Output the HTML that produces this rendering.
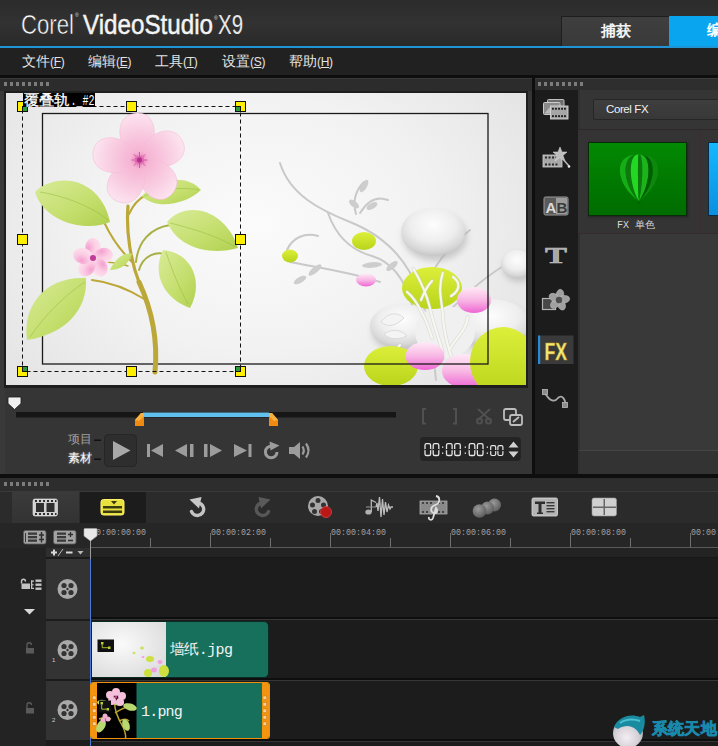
<!DOCTYPE html>
<html><head><meta charset="utf-8">
<style>
*{margin:0;padding:0;box-sizing:border-box}
html,body{width:718px;height:746px;overflow:hidden;background:#1b1b1b;font-family:"Liberation Sans",sans-serif}
.a{position:absolute}
svg{position:absolute;overflow:visible}
#title{left:0;top:0;width:718px;height:46px;background:linear-gradient(#2b2b2b,#323232 50%,#292929)}
#blue{left:0;top:46px;width:718px;height:2px;background:#1f95d6}
#menu{left:0;top:48px;width:718px;height:27px;background:#212121}
.mi{top:54px;color:#e4e4e4;font-size:14px;white-space:nowrap;line-height:15px}
.mi u{text-decoration:none;font-size:12px;letter-spacing:-0.3px}
#sep1{left:0;top:75px;width:718px;height:3px;background:#0e0e0e}
#lp{left:0;top:78px;width:532px;height:396px;background:#353535}
#rp{left:535px;top:78px;width:183px;height:396px;background:#333}
#sep2{left:532px;top:75px;width:3px;height:403px;background:#0e0e0e}
#sep3{left:0;top:474px;width:718px;height:4px;background:#0e0e0e}
#tl{left:0;top:478px;width:718px;height:268px;background:#1c1c1c}
.grip{height:4px;background:repeating-linear-gradient(90deg,#7c7c7c 0 3px,transparent 3px 6px)}
#prevframe{left:4px;top:91px;width:524px;height:297px;background:#1e1e1e}
#prev{left:6px;top:93px;width:520px;height:292px;overflow:hidden;background:radial-gradient(ellipse 380px 280px at 250px 130px,#fbfbfb,#f2f2f2 45%,#e4e4e4 85%,#dcdcdc 100%)}
.h{position:absolute;width:11px;height:11px;background:#ffef00;border:1.5px solid #111}
</style></head><body>
<div id="title" class="a"></div>
<svg width="718" height="46" style="left:0;top:0">
 <text x="21" y="33.5" font-size="28" fill="#ffffff" stroke="#303030" stroke-width="0.6" textLength="53" lengthAdjust="spacingAndGlyphs" font-family="Liberation Sans">Corel</text>
 <text x="75" y="17" font-size="5" fill="#ddd" font-family="Liberation Sans">®</text>
 <text x="83" y="33.5" font-size="28" fill="#f4f4f4" stroke="#f4f4f4" stroke-width="0.5" textLength="130" lengthAdjust="spacingAndGlyphs" font-family="Liberation Sans">VideoStudio</text>
 <text x="214" y="20" font-size="5" fill="#ddd" font-family="Liberation Sans">®</text>
 <text x="218" y="33.5" font-size="28" fill="#e6e6e6" textLength="25" lengthAdjust="spacingAndGlyphs" font-family="Liberation Sans">X9</text>
</svg>
<div class="a" style="left:561px;top:16px;width:108px;height:30px;background:linear-gradient(#3f3f3f,#393939);border-top:1px solid #1e1e1e;border-left:1px solid #1e1e1e;color:#f4f4f4;font-size:15px;font-weight:bold;text-align:center;line-height:27px">捕获</div>
<div class="a" style="left:669px;top:16px;width:49px;height:30px;background:#0aa5ef;color:#fff;font-size:15px;font-weight:bold;line-height:27px;padding-left:38px;white-space:nowrap;overflow:hidden">编辑</div>
<div id="blue" class="a"></div>
<div id="menu" class="a"></div>
<div class="a mi" style="left:22px">文件<u>(<b style="font-weight:normal;text-decoration:underline;text-underline-offset:1px">F</b>)</u></div>
<div class="a mi" style="left:88px">编辑<u>(<b style="font-weight:normal;text-decoration:underline;text-underline-offset:1px">E</b>)</u></div>
<div class="a mi" style="left:155px">工具<u>(<b style="font-weight:normal;text-decoration:underline;text-underline-offset:1px">T</b>)</u></div>
<div class="a mi" style="left:222px">设置<u>(<b style="font-weight:normal;text-decoration:underline;text-underline-offset:1px">S</b>)</u></div>
<div class="a mi" style="left:289px">帮助<u>(<b style="font-weight:normal;text-decoration:underline;text-underline-offset:1px">H</b>)</u></div>
<div id="sep1" class="a"></div>
<div id="lp" class="a"></div>
<div class="a" style="left:0;top:78px;width:532px;height:13px;background:#2c2c2c;border-top:1px solid #3a3a3a"></div>
<div class="a grip" style="left:4px;top:82px;width:46px"></div>
<div class="a" style="left:0;top:91px;width:5px;height:383px;background:#393939"></div>
<div id="prevframe" class="a"></div>
<div id="prev" class="a"><svg width="520" height="292" style="left:0;top:0;overflow:hidden">
<defs>
 <linearGradient id="lime" x1="0" y1="0" x2="0" y2="1"><stop offset="0" stop-color="#dcef3a"/><stop offset="1" stop-color="#b9d41a"/></linearGradient>
 <linearGradient id="pink" x1="0" y1="0" x2="0" y2="1"><stop offset="0" stop-color="#ffeaf6"/><stop offset="0.5" stop-color="#f8b8e4"/><stop offset="1" stop-color="#ee66d4"/></linearGradient>
 <radialGradient id="wb" cx="0.5" cy="0.35" r="0.65"><stop offset="0" stop-color="#fdfdfd"/><stop offset="0.55" stop-color="#eeeeee"/><stop offset="0.85" stop-color="#d8d8d8"/><stop offset="1" stop-color="#c6c6c6"/></radialGradient>
 <radialGradient id="pet" cx="0.2" cy="0.5" r="0.9"><stop offset="0" stop-color="#f4a0d0"/><stop offset="0.45" stop-color="#fbcde3"/><stop offset="1" stop-color="#fee6f1"/></radialGradient>
 <radialGradient id="petU" gradientUnits="userSpaceOnUse" cx="139.5" cy="160" r="50"><stop offset="0" stop-color="#e870b0"/><stop offset="0.18" stop-color="#f6b4d4"/><stop offset="0.6" stop-color="#f9cee2"/><stop offset="1" stop-color="#fde8f2"/></radialGradient>
 <filter id="blur3" x="-50%" y="-50%" width="200%" height="200%"><feGaussianBlur stdDeviation="3"/></filter>
 <linearGradient id="leaf" x1="0" y1="0" x2="1" y2="1"><stop offset="0" stop-color="#d8eb98"/><stop offset="0.6" stop-color="#c4de6c"/><stop offset="1" stop-color="#b0d050"/></linearGradient>
</defs>
<g transform="translate(-6,-93)">
 <!-- gray vines -->
 <g fill="none" stroke="#c9c9c9" stroke-width="2" stroke-linecap="round">
  <path d="M280,163 C290,195 320,210 350,222 C380,234 405,255 418,290 C428,315 432,340 436,380"/>
  <path d="M328,213 C336,236 350,250 372,256 C392,262 405,280 412,305"/>
  <path d="M287,250 C292,238 305,232 318,236 M290,262 C320,268 350,272 380,282"/>
  <path d="M356,214 C352,200 356,190 364,182 M360,213 C368,200 378,196 388,200"/>
  <path d="M420,300 C430,270 445,250 470,230 M440,320 C460,300 480,280 505,265"/>
 </g>
 <g fill="#cdcdcd">
  <ellipse cx="364" cy="186" rx="3" ry="7" transform="rotate(30 364 186)"/>
  <ellipse cx="354" cy="204" rx="3" ry="6" transform="rotate(-50 354 204)"/>
  <ellipse cx="372" cy="206" rx="3" ry="6" transform="rotate(60 372 206)"/>
  <ellipse cx="315" cy="270" rx="3" ry="8" transform="rotate(50 315 270)"/>
  <ellipse cx="300" cy="280" rx="3" ry="7" transform="rotate(60 300 280)"/>
  <ellipse cx="372" cy="265" rx="2.8" ry="10" transform="rotate(85 372 265)"/><ellipse cx="392" cy="266" rx="3" ry="7" transform="rotate(50 392 266)"/>
 </g>
 <!-- white bubbles -->
 <g filter="url(#blur3)" fill="#a8a8a8" opacity="0.55">
  <ellipse cx="519" cy="268" rx="16" ry="14"/>
  <ellipse cx="435" cy="237" rx="32" ry="24"/>
  <ellipse cx="404" cy="331" rx="32" ry="22"/>
  <ellipse cx="494" cy="328" rx="38" ry="24"/>
 </g>
 <ellipse cx="517" cy="264" rx="16" ry="14" fill="url(#wb)"/>
 <ellipse cx="433" cy="232" rx="32" ry="24" fill="url(#wb)"/>
 <ellipse cx="402" cy="326" rx="32" ry="22" fill="url(#wb)"/>
 <ellipse cx="492" cy="323" rx="38" ry="24" fill="url(#wb)"/>
 <ellipse cx="445" cy="332" rx="30" ry="26" fill="#f0f0f0"/>

 <!-- lime and pink -->
 <ellipse cx="290" cy="256" rx="8" ry="6.5" fill="url(#lime)"/>
 <ellipse cx="364" cy="241" rx="12" ry="9" fill="url(#lime)"/>
 <ellipse cx="366" cy="280" rx="10" ry="6.5" fill="url(#pink)"/>
 <ellipse cx="432" cy="288" rx="30" ry="21" fill="url(#lime)"/>
 <ellipse cx="474" cy="300" rx="17" ry="13" fill="url(#pink)"/>
 <g fill="none" stroke-linecap="round">
  <path d="M442.7,352 C438,335 432,320 430,308 C426,292 420,280 413.4,268.8 M451,356 C446,340 443,325 442.7,312.7 C441,298 438,288 442.7,273 M432.2,338 C428,325 425,318 421.8,312.7 C417,302 412,296 407,291.8 M453,277 C460,282 461,290 451,296 M449,350 C455,340 460,335 463.6,329.4 C466,325 467,322 467.7,317 M421,300 C425,290 428,285 432,281 M400,345 C395,350 395,358 402,360 C407,361 409,356 405,353" stroke="#cfcfcf" stroke-width="3.6" opacity="0.6"/>
  <path d="M442.7,352 C438,335 432,320 430,308 C426,292 420,280 413.4,268.8 M451,356 C446,340 443,325 442.7,312.7 C441,298 438,288 442.7,273 M432.2,338 C428,325 425,318 421.8,312.7 C417,302 412,296 407,291.8 M453,277 C460,282 461,290 451,296 M449,350 C455,340 460,335 463.6,329.4 C466,325 467,322 467.7,317 M421,300 C425,290 428,285 432,281 M400,345 C395,350 395,358 402,360 C407,361 409,356 405,353" stroke="#f6f8ee" stroke-width="2.2"/>
 </g>
 <g fill="#f4f4f4" stroke="#d4d4d4" stroke-width="0.8">
  <path d="M381,322 C388,312 398,312 404,318 C396,326 388,328 381,322 Z"/>
  <path d="M384,334 C392,328 402,330 407,336 C398,340 390,340 384,334 Z"/>
 </g>
 <ellipse cx="391" cy="366" rx="27" ry="20" fill="url(#lime)"/>
 <ellipse cx="425" cy="356" rx="19.5" ry="14" fill="url(#pink)"/>
 <ellipse cx="465" cy="371" rx="23" ry="17" fill="url(#pink)"/>
 <ellipse cx="503" cy="362" rx="33" ry="35" fill="url(#lime)"/>
 <!-- inner rect -->
 <rect x="42.5" y="113.5" width="445.5" height="250.5" fill="none" stroke="#1a1a1a" stroke-width="1.3"/>
 <!-- flower -->
 <g fill="none" stroke="#bba838" stroke-linecap="round">
  <path d="M128,206 C126,230 130,260 140,285" stroke-width="3.2"/><path d="M139,282 C152,310 158,340 155,372" stroke-width="5"/>
  <path d="M132,262 C120,250 110,235 104,222" stroke-width="2"/>
  <path d="M129,214 C133,205 138,199 146,195" stroke-width="2"/>
  <path d="M136,262 C138,242 150,228 170,225" stroke-width="2" stroke="#a8b044"/>
  <path d="M139,270 C143,256 156,250 168,255" stroke-width="2" stroke="#a8b044"/>
  <path d="M146,300 C130,290 110,282 92,280" stroke-width="2"/>
  <path d="M128,266 C118,262 108,262 100,262" stroke-width="1.5"/>
 </g>
 <g fill="url(#leaf)">
  <path d="M35,192 C55,172 100,176 110,222 C88,232 45,224 35,192 Z"/>
  <path d="M142,196 C155,180 185,172 201,190 C185,205 155,210 142,196 Z"/>
  <path d="M167,222 C185,200 225,208 238,248 C210,256 178,248 167,222 Z"/>
  <path d="M190,308 C205,280 190,252 163,250 C152,272 162,298 190,308 Z"/>
  <path d="M110,270 C115,258 125,252 132,254 C128,265 120,270 110,270 Z"/>
  <path d="M27,340 C22,306 45,276 86,278 C88,310 65,334 27,340 Z"/>
 </g>
 <g stroke="#98bc40" stroke-width="0.8" fill="none" opacity="0.7">
  <path d="M40,192 C60,195 90,205 108,220 M144,196 C160,190 180,186 199,190 M170,223 C190,228 215,235 236,247 M188,304 C180,290 172,270 166,252 M30,337 C45,315 65,295 85,282"/>
 </g>
 <g fill="url(#petU)" stroke="#f4bcd6" stroke-width="0.6"><path d="M139.5,160.0 C116.9,152.5 111.4,116.2 135.4,113.2 C159.4,110.1 160.4,148.7 139.5,160.0 Z"/><path d="M139.5,160.0 C139.2,136.2 171.8,119.2 182.4,140.9 C193.1,162.6 157.0,176.1 139.5,160.0 Z"/><path d="M139.5,160.0 C161.9,152.0 188.6,177.2 171.6,194.4 C154.5,211.5 129.9,181.8 139.5,160.0 Z"/><path d="M139.5,160.0 C153.7,179.1 137.4,212.0 116.0,200.7 C94.6,189.4 115.9,157.2 139.5,160.0 Z"/><path d="M139.5,160.0 C126.4,179.9 89.9,175.8 93.2,151.8 C96.5,127.9 134.0,136.8 139.5,160.0 Z"/></g>
 <g stroke="#c8449a" stroke-width="0.9" opacity="0.85"><path d="M139.5,160 L147.5,160.0 M139.5,160 L144.1,161.9 M139.5,160 L145.2,165.7 M139.5,160 L141.4,164.6 M139.5,160 L139.5,168.0 M139.5,160 L137.6,164.6 M139.5,160 L133.8,165.7 M139.5,160 L134.9,161.9 M139.5,160 L131.5,160.0 M139.5,160 L134.9,158.1 M139.5,160 L133.8,154.3 M139.5,160 L137.6,155.4 M139.5,160 L139.5,152.0 M139.5,160 L141.4,155.4 M139.5,160 L145.2,154.3 M139.5,160 L144.1,158.1 "/></g>
 <circle cx="139.5" cy="160" r="2.5" fill="#b83090"/>
 <g transform="translate(93,258)">
  <ellipse cx="0" cy="-10" rx="8" ry="10" fill="url(#pet)"/>
  <ellipse cx="10" cy="-2" rx="8" ry="10" fill="url(#pet)" transform="rotate(72 10 -2)"/>
  <ellipse cx="6" cy="9" rx="8" ry="10" fill="url(#pet)" transform="rotate(144 6 9)"/>
  <ellipse cx="-6" cy="9" rx="8" ry="10" fill="url(#pet)" transform="rotate(-144 -6 9)"/>
  <ellipse cx="-10" cy="-2" rx="8" ry="10" fill="url(#pet)" transform="rotate(-72 -10 -2)"/>
  <circle r="3" fill="#c03a98"/>
 </g>
 <!-- selection -->
 <rect x="22.5" y="106.5" width="218" height="265" fill="none" stroke="#111" stroke-width="1" stroke-dasharray="4,3"/>
</g>
</svg>
<div class="h" style="left:11px;top:8px"><i style="position:absolute;right:0;bottom:0;width:5px;height:5px;background:#2a9a3a;border-left:1px solid #111;border-top:1px solid #111"></i></div>
<div class="h" style="left:120px;top:8px"></div>
<div class="h" style="left:229px;top:8px"><i style="position:absolute;left:0;bottom:0;width:5px;height:5px;background:#2a9a3a;border-right:1px solid #111;border-top:1px solid #111"></i></div>
<div class="h" style="left:11px;top:141px"></div>
<div class="h" style="left:229px;top:141px"></div>
<div class="h" style="left:11px;top:273px"><i style="position:absolute;right:0;top:0;width:5px;height:5px;background:#2a9a3a;border-left:1px solid #111;border-bottom:1px solid #111"></i></div>
<div class="h" style="left:120px;top:273px"></div>
<div class="h" style="left:229px;top:273px"><i style="position:absolute;left:0;top:0;width:5px;height:5px;background:#2a9a3a;border-right:1px solid #111;border-bottom:1px solid #111"></i></div>
<div class="a" style="left:17px;top:0;width:72px;height:14px;background:#000"></div><svg width="90" height="20" style="left:0;top:0"><text x="17.5" y="12" font-size="14.5" fill="#fff" stroke="#fff" stroke-width="0.25" textLength="46" lengthAdjust="spacingAndGlyphs">覆叠轨</text><text x="64.5" y="12" font-family="Liberation Mono" font-size="14" fill="#fff" textLength="24" lengthAdjust="spacingAndGlyphs">._#2</text></svg>
</div>

<!-- player controls -->
<svg width="532" height="90" style="left:0;top:385px">
 <g transform="translate(0,-385)">
  <rect x="6" y="385" width="520" height="2" fill="#1e1e1e"/>
  <path d="M8,398 Q8,397 9.5,397 L20,397 Q21,397 21,398 L21,403.5 L14.5,409.5 L8,403.5 Z" fill="#f0f0f0" stroke="#1a1a1a" stroke-width="0.8"/>
  <rect x="16" y="412" width="380" height="5.5" fill="#161616"/>
  <rect x="143" y="412.5" width="126" height="4.5" fill="#62c0ef"/>
  <path d="M135,426 L135,420 L141,413 L144,413 L144,426 Z" fill="#f08a10"/>
  <path d="M135,420 L141,413 L144,413 L144,416 L139,421 Z" fill="#f8b040"/>
  <path d="M278,426 L278,420 L272,413 L269,413 L269,426 Z" fill="#f08a10"/>
  <path d="M278,420 L272,413 L269,413 L269,416 L274,421 Z" fill="#f8b040"/>
  <rect x="94" y="439.5" width="7" height="1.5" fill="#111"/>
  <rect x="94" y="458.5" width="7" height="1.5" fill="#111"/>
  <rect x="104.5" y="434.5" width="32" height="32" rx="4" fill="#2e2e2e" stroke="#262626"/>
  <path d="M113,441 L130.5,450.5 L113,460 Z" fill="#a8a8a8"/>
  <g fill="#9c9c9c">
   <rect x="147" y="444" width="3" height="13"/><path d="M163,444 L151,450.5 L163,457 Z"/>
   <path d="M187,444 L175,450.5 L187,457 Z"/><rect x="190" y="444" width="3.5" height="13"/>
   <rect x="204" y="444" width="3.5" height="13"/><path d="M210,444 L222,450.5 L210,457 Z"/>
   <path d="M234,444 L247,450.5 L234,457 Z"/><rect x="248.5" y="444" width="3" height="13"/>
   <path d="M289,447 L294,447 L300,442 L300,459 L294,454 L289,454 Z"/>
  </g>
  <g fill="none" stroke="#9c9c9c" stroke-width="2.2">
   <path d="M302.5,446.5 Q305,450.5 302.5,454.5"/><path d="M306,443.5 Q311,450.5 306,457.5"/>
  </g>
  <path d="M271.5,446.2 A5.8,5.8 0 1 0 277,452" fill="none" stroke="#9c9c9c" stroke-width="3"/><path d="M269.5,441.5 L279.5,445.5 L270.5,450.5 Z" fill="#9c9c9c"/>
  <g fill="none" stroke="#505050" stroke-width="2">
   <path d="M426,409 L423,409 L423,423.5 L426,423.5"/>
   <path d="M453,409 L456,409 L456,423.5 L453,423.5"/>
   <path d="M478,409 L490,420 M490,409 L478,420"/>
   <circle cx="479.5" cy="421" r="2.5"/><circle cx="488.5" cy="421" r="2.5"/>
  </g>
  <g fill="none" stroke="#bdbdbd" stroke-width="1.8">
   <rect x="504" y="409" width="12" height="11" rx="2"/>
   <rect x="510" y="415" width="12" height="10" rx="2" fill="#353535"/>
   <path d="M513,422 L519,417"/>
  </g>
  <rect x="420" y="437" width="101" height="24" rx="4" fill="#242424"/>
  <rect x="425.0" y="443.7" width="5.6" height="11.8" rx="1.6" fill="none" stroke="#e6e6e6" stroke-width="1.3"/><rect x="424.3" y="449" width="7" height="1.2" fill="#242424"/>
  <rect x="433.2" y="443.7" width="5.6" height="11.8" rx="1.6" fill="none" stroke="#e6e6e6" stroke-width="1.3"/><rect x="432.5" y="449" width="7" height="1.2" fill="#242424"/>
  <rect x="446.5" y="443.7" width="5.6" height="11.8" rx="1.6" fill="none" stroke="#e6e6e6" stroke-width="1.3"/><rect x="445.8" y="449" width="7" height="1.2" fill="#242424"/>
  <rect x="454.7" y="443.7" width="5.6" height="11.8" rx="1.6" fill="none" stroke="#e6e6e6" stroke-width="1.3"/><rect x="454.0" y="449" width="7" height="1.2" fill="#242424"/>
  <rect x="469.2" y="443.7" width="5.6" height="11.8" rx="1.6" fill="none" stroke="#e6e6e6" stroke-width="1.3"/><rect x="468.5" y="449" width="7" height="1.2" fill="#242424"/>
  <rect x="477.4" y="443.7" width="5.6" height="11.8" rx="1.6" fill="none" stroke="#e6e6e6" stroke-width="1.3"/><rect x="476.7" y="449" width="7" height="1.2" fill="#242424"/>
  <rect x="490.7" y="445.7" width="5" height="9.8" rx="1.4" fill="none" stroke="#e6e6e6" stroke-width="1.2"/><rect x="490.0" y="450" width="7" height="1.1" fill="#242424"/>
  <rect x="497.9" y="445.7" width="5" height="9.8" rx="1.4" fill="none" stroke="#e6e6e6" stroke-width="1.2"/><rect x="497.2" y="450" width="7" height="1.1" fill="#242424"/>
  <rect x="442.0" y="446.5" width="1.3" height="1.3" fill="#e6e6e6"/><rect x="442.0" y="452.5" width="1.3" height="1.3" fill="#e6e6e6"/>
  <rect x="464.7" y="446.5" width="1.3" height="1.3" fill="#e6e6e6"/><rect x="464.7" y="452.5" width="1.3" height="1.3" fill="#e6e6e6"/>
  <rect x="486.7" y="446.5" width="1.3" height="1.3" fill="#e6e6e6"/><rect x="486.7" y="452.5" width="1.3" height="1.3" fill="#e6e6e6"/>
  <path d="M508.5,447.5 L513.5,441.5 L518.5,447.5 Z M508.5,451.5 L513.5,457.5 L518.5,451.5 Z" fill="#d0d0d0"/>
 </g>
</svg>
<div class="a" style="left:67.5px;top:433px;font-size:12px;color:#a0a0a0;line-height:13px">项目</div>
<div class="a" style="left:67.5px;top:452px;font-size:12px;color:#f8f8f8;line-height:13px;text-shadow:0 0 2px #aaa">素材</div>
<div id="sep2" class="a"></div>
<div id="rp" class="a"></div>
<div class="a" style="left:535px;top:78px;width:183px;height:12px;background:#2e2e2e;border-top:1px solid #3c3c3c"></div>
<div class="a" style="left:535px;top:90px;width:43px;height:384px;background:#1c1c1c"></div>
<div class="a" style="left:578px;top:90px;width:140px;height:384px;background:#393939;border-left:2px solid #2f2f2f"></div>
<div class="a" style="left:578px;top:90px;width:140px;height:40px;background:#353535;border-left:2px solid #2f2f2f"></div>
<div class="a" style="left:593px;top:99px;width:130px;height:21px;background:linear-gradient(#3e3e3e,#383838);border:1px solid #262626;border-radius:2px;color:#f0f0f0;font-size:11.5px;line-height:19px;padding-left:12px;white-space:nowrap;letter-spacing:-0.4px">Corel FX</div>
<div class="a" style="left:578px;top:129px;width:140px;height:105px;background:#333;border-top:1px solid #2a2a2a;border-bottom:1px solid #2e2e2e"></div>
<div class="a" style="left:579px;top:130px;width:120px;height:103px;background:#343434;border:1px solid #3a3232"></div>
<div class="a" style="left:702px;top:130px;width:20px;height:103px;background:#343434;border:1px solid #3a3232"></div>
<div class="a" style="left:588px;top:142px;width:99px;height:74px;background:linear-gradient(#038a03,#017a01 50%,#006c00);border:1px solid #0a2a0a;box-shadow:1px 1px 2px #222"></div>
<div class="a" style="left:708px;top:142px;width:14px;height:74px;background:linear-gradient(#14b8ff,#0a90e0);border:1px solid #0a2a4a"></div>
<svg width="50" height="55" style="left:614px;top:151px">
 <defs><filter id="bb" x="-20%" y="-20%" width="140%" height="140%"><feGaussianBlur stdDeviation="0.6"/></filter></defs>
 <g filter="url(#bb)"><path d="M25,3.5 C-2.0,2 1.0,34 25,50 C8.2,34 6.1,2 25,3.5 Z" fill="#16ae16"/><path d="M25,3.5 C6.1,2 8.2,34 25,50 C14.8,34 13.5,2 25,3.5 Z" fill="#0b780b"/><path d="M25,3.5 C13.5,2 14.8,34 25,50 C23.8,34 23.6,2 25,3.5 Z" fill="#20d820"/><path d="M25,3.5 C23.6,2 23.8,34 25,50 C29.2,34 29.7,2 25,3.5 Z" fill="#0a760a"/><path d="M25,3.5 C29.7,2 29.2,34 25,50 C37.0,34 38.5,2 25,3.5 Z" fill="#1ab41a"/><path d="M25,3.5 C38.5,2 37.0,34 25,50 C42.4,34 44.6,2 25,3.5 Z" fill="#055c05"/><path d="M25,3.5 C44.6,2 42.4,34 25,50 C49.0,34 52.0,2 25,3.5 Z" fill="#0b880b"/>
 <path d="M25,50 L23,53 L27,53 Z" fill="#066006"/></g>
</svg>
<div class="a" style="left:617px;top:220px;font-size:10px;color:#d8d8d8;white-space:nowrap;line-height:11px;font-family:'Liberation Mono',monospace">FX 单色</div>
<div class="a" style="left:578px;top:450px;width:140px;height:24px;background:#333;border-top:1px solid #454545;border-left:2px solid #2f2f2f"></div>
<svg width="43" height="384" style="left:535px;top:90px">
 <g transform="translate(-535,-90)">
  <!-- media icon -->
  <rect x="547.5" y="99.5" width="16.5" height="12" rx="1" fill="#6e6e6e" stroke="#c0c0c0" stroke-width="1"/>
  <rect x="543.5" y="102.5" width="16.5" height="12" rx="1" fill="#8a8a8a" stroke="#cacaca" stroke-width="1"/>
  <path d="M544.5,113.5 L549,108 C552,106 556,107 559,110 L559,113.5 Z" fill="#b8b8b8"/>
  <rect x="550.5" y="106" width="17.5" height="13" fill="#a6a6a6" stroke="#d4d4d4" stroke-width="0.9"/>
  <g fill="#1e1e1e"><rect x="552.0" y="107.8" width="1.9" height="1.9"/><rect x="552.0" y="115.2" width="1.9" height="1.9"/><rect x="555.0" y="107.8" width="1.9" height="1.9"/><rect x="555.0" y="115.2" width="1.9" height="1.9"/><rect x="558.1" y="107.8" width="1.9" height="1.9"/><rect x="558.1" y="115.2" width="1.9" height="1.9"/><rect x="561.1" y="107.8" width="1.9" height="1.9"/><rect x="561.1" y="115.2" width="1.9" height="1.9"/><rect x="564.0" y="107.8" width="1.9" height="1.9"/><rect x="564.0" y="115.2" width="1.9" height="1.9"/></g>
  <!-- instant project -->
  <rect x="543" y="155" width="19" height="12" fill="#a8a8a8" stroke="#d0d0d0" stroke-width="0.8"/>
  <g fill="#2a2a2a"><rect x="545" y="156.5" width="2" height="2"/><rect x="548.5" y="156.5" width="2" height="2"/><rect x="552" y="156.5" width="2" height="2"/><rect x="555.5" y="156.5" width="2" height="2"/>
  <rect x="545" y="163.5" width="2" height="2"/><rect x="548.5" y="163.5" width="2" height="2"/><rect x="552" y="163.5" width="2" height="2"/><rect x="555.5" y="163.5" width="2" height="2"/></g>
  <path d="M560,147 L562,152 L567,152 L563,155.5 L565,161 L560,157.5 L555,161 L557,155.5 L553,152 L558,152 Z" fill="#bdbdbd" stroke="#ddd" stroke-width="0.5"/>
  <path d="M562,158 L569,166" stroke="#bbb" stroke-width="1.5"/><circle cx="569" cy="166.5" r="1.3" fill="#eee"/>
  <!-- AB -->
  <rect x="544" y="197" width="24" height="18" rx="1.5" fill="#5a5a5a" stroke="#9a9a9a" stroke-width="1"/>
  <rect x="556" y="198" width="11" height="16" fill="#9c9c9c"/>
  <text x="545.5" y="213" font-family="Liberation Sans" font-weight="bold" font-size="15" fill="#dcdcdc">A</text>
  <text x="556.5" y="213" font-family="Liberation Sans" font-weight="bold" font-size="15" fill="#3a3a3a">B</text>
  <!-- T -->
  <text x="545" y="263" font-family="Liberation Serif" font-weight="bold" font-size="24" fill="#a8a8a8" stroke="#c8c8c8" stroke-width="0.5" textLength="22" lengthAdjust="spacingAndGlyphs">T</text>
  <!-- graphic -->
  <rect x="542.5" y="298.5" width="13" height="11" fill="#484848" stroke="#b4b4b4" stroke-width="1.2"/>
  <g fill="#a0a0a0" stroke="#c4c4c4" stroke-width="0.5"><ellipse cx="559.9" cy="294.9" rx="5.6" ry="3.8" transform="rotate(-80 559.9 294.9)"/><ellipse cx="564.1" cy="299.3" rx="5.6" ry="3.8" transform="rotate(-8 564.1 299.3)"/><ellipse cx="561.3" cy="304.7" rx="5.6" ry="3.8" transform="rotate(64 561.3 304.7)"/><ellipse cx="555.3" cy="303.6" rx="5.6" ry="3.8" transform="rotate(136 555.3 303.6)"/><ellipse cx="554.4" cy="297.6" rx="5.6" ry="3.8" transform="rotate(208 554.4 297.6)"/></g>
  <circle cx="559" cy="300" r="3.2" fill="#4e4e4e"/>
  <!-- FX selected -->
  <rect x="538.5" y="335.5" width="35" height="28.5" fill="#3a3a3a"/>
  <rect x="538" y="335.5" width="2.2" height="28.5" fill="#2a8ad6"/>
  <text x="544.5" y="359.5" font-family="Liberation Sans" font-weight="bold" font-size="23" fill="#f4e878" stroke="#b89a18" stroke-width="0.5" textLength="22.5" lengthAdjust="spacingAndGlyphs">FX</text>
  <!-- path -->
  <path d="M545,393 C550,402 555,402 558,398 C562,394 566,400 565,405" fill="none" stroke="#a8a8a8" stroke-width="1.8"/>
  <rect x="542.5" y="389.5" width="5" height="5" fill="#8c8c8c" stroke="#bbb" stroke-width="0.8"/>
  <rect x="562.5" y="402.5" width="5" height="5" fill="#8c8c8c" stroke="#bbb" stroke-width="0.8"/>
 </g>
</svg>
<div class="a grip" style="left:538px;top:82px;width:46px"></div>
<div id="sep3" class="a"></div>
<div id="tl" class="a"></div>
<div class="a" style="left:0;top:478px;width:718px;height:13px;background:#2d2d2d"></div>
<div class="a" style="left:0;top:491px;width:718px;height:32px;background:#2b2b2b;border-top:1px solid #3a3a3a"></div>
<div class="a" style="left:12px;top:492px;width:67px;height:31px;background:linear-gradient(#3a3a3a,#333)"></div>
<div class="a" style="left:80px;top:492px;width:66px;height:31px;background:#1c1c1c"></div>
<div class="a" style="left:0;top:523px;width:718px;height:25px;background:#262626"></div>
<div class="a" style="left:91px;top:547px;width:627px;height:1px;background:#5a5a5a"></div>
<div class="a" style="left:0;top:548px;width:46px;height:198px;background:#232323"></div>
<div class="a" style="left:46px;top:548px;width:44px;height:10px;background:#2f2f2f;border-bottom:1px solid #1a1a1a"></div><div class="a" style="left:91px;top:548px;width:627px;height:10px;background:#232323;border-bottom:1px solid #181818"></div>
<div class="a" style="left:46px;top:559px;width:44px;height:60px;background:#333"></div>
<div class="a" style="left:46px;top:621px;width:44px;height:58px;background:#333"></div>
<div class="a" style="left:46px;top:681px;width:44px;height:59px;background:#333"></div>
<div class="a" style="left:91px;top:617px;width:627px;height:2px;background:#0e0e0e;border-bottom:1px solid #363636;box-sizing:content-box"></div>
<div class="a" style="left:91px;top:678px;width:627px;height:2px;background:#0e0e0e;border-bottom:1px solid #363636;box-sizing:content-box"></div>
<div class="a" style="left:91px;top:739px;width:627px;height:2px;background:#0e0e0e;border-bottom:1px solid #363636;box-sizing:content-box"></div>
<div class="a" style="left:90px;top:535px;width:1px;height:24px;background:#9a9a9a"></div><div class="a" style="left:90px;top:559px;width:1px;height:187px;background:#4a78d8"></div>
<svg width="718" height="268" style="left:0;top:478px">
 <g transform="translate(0,-478)">
  <!-- storyboard icon -->
  <rect x="33" y="499" width="24.5" height="17" rx="2" fill="#d0d0d0" stroke="#eee" stroke-width="0.6"/>
  <g fill="#2f2f2f">
   <rect x="36" y="503" width="8" height="9"/><rect x="46.5" y="503" width="8" height="9"/>
   <rect x="35" y="500" width="2" height="2"/><rect x="39" y="500" width="2" height="2"/><rect x="43" y="500" width="2" height="2"/><rect x="47" y="500" width="2" height="2"/><rect x="51" y="500" width="2" height="2"/><rect x="55" y="500" width="1.5" height="2"/>
   <rect x="35" y="513" width="2" height="2"/><rect x="39" y="513" width="2" height="2"/><rect x="43" y="513" width="2" height="2"/><rect x="47" y="513" width="2" height="2"/><rect x="51" y="513" width="2" height="2"/><rect x="55" y="513" width="1.5" height="2"/>
  </g>
  <!-- timeline icon yellow -->
  <rect x="101" y="499.5" width="23" height="15.5" rx="2.5" fill="#e8e040" stroke="#fff070" stroke-width="1"/>
  <rect x="103" y="506" width="19" height="2.5" fill="#3a3a10"/><rect x="103" y="510.5" width="19" height="2.5" fill="#3a3a10"/>
  <path d="M111,501 L117,501 L114,504.5 Z" fill="#3a3a10"/>
  <!-- undo -->
  <path d="M198.5,503 A6.3,6.3 0 1 1 191.5,511.5" fill="none" stroke="#c4c4c4" stroke-width="3.4" stroke-linecap="round"/>
  <path d="M189.5,499.5 L201.5,497 L199,508.5 Z" fill="#c8c8c8"/>
  <!-- redo dim -->
  <path d="M261.5,503 A6.3,6.3 0 1 0 268.5,511.5" fill="none" stroke="#575757" stroke-width="3.4" stroke-linecap="round"/>
  <path d="M270.5,499.5 L258.5,497 L261,508.5 Z" fill="#5a5a5a"/>
  <!-- record -->
  <circle cx="318" cy="506" r="10" fill="#a8a8a8"/>
  <g fill="#333"><circle cx="318" cy="500.5" r="2.5"/><circle cx="312.5" cy="505" r="2.5"/><circle cx="323.5" cy="505" r="2.5"/><circle cx="314.5" cy="511.5" r="2.5"/><circle cx="321.5" cy="511.5" r="2.5"/></g>
  <circle cx="326" cy="512" r="5.5" fill="#b81818" stroke="#d84040" stroke-width="0.8"/>
  <!-- audio -->
  <path d="M376,507 L377,503 L378,511 L379.5,497 L381,517 L382.5,499 L384,515 L385.5,502 L387,512 L388.5,505 L390,509 L391,507 L393,507" fill="none" stroke="#bcbcbc" stroke-width="1.3"/>
  <ellipse cx="368.5" cy="512" rx="3.2" ry="2.6" fill="#b0b0b0"/>
  <path d="M371.3,512 L371.3,500 L376,502.5" fill="none" stroke="#b8b8b8" stroke-width="1.3"/>
  <path d="M366,507 L376,507" stroke="#999" stroke-width="1"/>
  <!-- score fitter -->
  <rect x="420" y="501" width="27" height="13" fill="#8a8a8a" stroke="#aaa" stroke-width="0.8"/>
  <g fill="#444"><rect x="422" y="502" width="2" height="2"/><rect x="426" y="502" width="2" height="2"/><rect x="430" y="502" width="2" height="2"/><rect x="438" y="502" width="2" height="2"/><rect x="442" y="502" width="2" height="2"/><rect x="422" y="511" width="2" height="2"/><rect x="426" y="511" width="2" height="2"/><rect x="438" y="511" width="2" height="2"/><rect x="442" y="511" width="2" height="2"/></g>
  <path d="M436,496 C441,497 440,504 435,505 C430,507 430,512 434,513 C437,514 438,510 436,508 L433,518 C432,521 428,520 429,517" fill="none" stroke="#ddd" stroke-width="1.8"/>
  <!-- multicam -->
  <defs><radialGradient id="mc" cx="0.4" cy="0.35" r="0.7"><stop offset="0" stop-color="#9a9a9a"/><stop offset="1" stop-color="#5a5a5a"/></radialGradient></defs>
  <circle cx="494.5" cy="505" r="6.5" fill="url(#mc)"/>
  <circle cx="487.5" cy="508" r="6.5" fill="url(#mc)"/>
  <circle cx="479.5" cy="511" r="6.8" fill="url(#mc)"/>
  <!-- subtitle -->
  <rect x="532" y="498" width="25.5" height="18" rx="1.5" fill="#b4b4b4" stroke="#dcdcdc" stroke-width="0.8"/>
  <path d="M535,501.5 L545,501.5 L545,504 L541.5,504 L541.5,512.5 L543,512.5 L543,514 L537,514 L537,512.5 L538.5,512.5 L538.5,504 L535,504 Z" fill="#2e2e2e"/>
  <g fill="#3a3a3a"><rect x="546.5" y="502" width="8" height="1.4"/><rect x="546.5" y="505" width="8" height="1.4"/><rect x="546.5" y="508" width="8" height="1.4"/><rect x="546.5" y="511" width="8" height="1.4"/></g>
  <!-- split screen -->
  <rect x="592" y="498" width="24.5" height="18" rx="2" fill="#d0d0d0" stroke="#999" stroke-width="0.6"/>
  <rect x="603.5" y="499" width="1.5" height="16" fill="#666"/><rect x="593" y="506.5" width="23" height="1.5" fill="#666"/>
  <!-- ruler buttons -->
  <rect x="23.5" y="530.5" width="22.5" height="13.5" rx="2" fill="#a2a2a2" stroke="#5a5a5a" stroke-width="0.8"/>
  <g fill="#3a3a3a"><rect x="28" y="532.5" width="9" height="2.3"/><rect x="28" y="536" width="9" height="2.3"/><rect x="28" y="539.5" width="9" height="2.3"/><rect x="25" y="533" width="1" height="9"/></g>
  <path d="M39,535 L44,535 M41.5,532 L41.5,537.5 M39,539.5 L44,539.5 M41.5,537 L41.5,542.5" stroke="#2e2e2e" stroke-width="1.5"/>
  <rect x="53.5" y="530.5" width="22.5" height="13.5" rx="2" fill="#a2a2a2" stroke="#5a5a5a" stroke-width="0.8"/>
  <g fill="#3a3a3a"><rect x="57" y="532.5" width="9" height="2.3"/><rect x="57" y="536" width="9" height="2.3"/><rect x="57" y="539.5" width="9" height="2.3"/></g>
  <path d="M68,534.5 L73,534.5 M70.5,532 L70.5,537 M68,540.5 L73,540.5" stroke="#2e2e2e" stroke-width="1.3"/>
  <!-- +/- -->
  <path d="M51,552.5 L57,552.5 M54,549.5 L54,555.5" stroke="#d8d8d8" stroke-width="2"/>
  <path d="M58,556 L63,549" stroke="#c8c8c8" stroke-width="0.9"/>
  <path d="M66,552.5 L72.5,552.5" stroke="#d8d8d8" stroke-width="2"/>
  <path d="M77.5,551 L83.5,551 L80.5,554.5 Z" fill="#b8b8b8"/>
  <!-- ticks -->
  <g stroke="#707070" stroke-width="1">
   <path d="M210.5,533 V547 M330.5,533 V547 M450.5,533 V547 M570.5,533 V547 M690.5,533 V547"/>
   <path d="M150.5,538 V547 M270.5,538 V547 M390.5,538 V547 M510.5,538 V547 M630.5,538 V547"/>
  </g>
  <g font-family="Liberation Mono" font-size="9.5" fill="#a4a4a4">
   <text x="91" y="535" textLength="55" lengthAdjust="spacingAndGlyphs">00:00:00:00</text>
   <text x="211" y="535" textLength="55" lengthAdjust="spacingAndGlyphs">00:00:02:00</text>
   <text x="331" y="535" textLength="55" lengthAdjust="spacingAndGlyphs">00:00:04:00</text>
   <text x="451" y="535" textLength="55" lengthAdjust="spacingAndGlyphs">00:00:06:00</text>
   <text x="571" y="535" textLength="55" lengthAdjust="spacingAndGlyphs">00:00:08:00</text>
   <text x="691" y="535" textLength="55" lengthAdjust="spacingAndGlyphs">00:00:10:00</text>
  </g>
  <path d="M84,529 Q84,528.5 85,528.5 L96,528.5 Q97,528.5 97,529 L97,536 L90.5,541 L84,536 Z" fill="#e8e8e8" stroke="#aaa" stroke-width="0.6"/>
  <!-- left col icons -->
  <g fill="#c4c4c4">
   <rect x="21.5" y="583.5" width="8.5" height="5.5"/>
   <rect x="31" y="580.5" width="1.3" height="8.5"/><rect x="31" y="580.5" width="3" height="1.2"/><rect x="31" y="584.2" width="2.6" height="1.1"/><rect x="31" y="587.8" width="3" height="1.2"/>
   <rect x="35.5" y="579.5" width="6" height="2.4"/><rect x="35.5" y="583.5" width="6" height="2.4"/><rect x="35.5" y="587.5" width="6" height="2.4"/>
  </g>
  <path d="M21.5,583.5 L21.5,581.5 C21.5,578.5 25.5,578.5 25.5,581.5" fill="none" stroke="#c4c4c4" stroke-width="1.4"/>
  <path d="M24,609 L35,609 L29.5,614.5 Z" fill="#d8d8d8"/>
  <g fill="#5a5a5a">
   <rect x="26" y="648" width="8" height="5.5"/><path d="M27,648 L27,645 C27,642 31.5,642 31.5,645" fill="none" stroke="#5a5a5a" stroke-width="1.3"/>
   <rect x="26" y="708" width="8" height="5.5"/><path d="M27,708 L27,705 C27,702 31.5,702 31.5,705" fill="none" stroke="#5a5a5a" stroke-width="1.3"/>
  </g>
  <text x="52" y="662" font-family="Liberation Sans" font-size="6" fill="#ccc">1</text>
  <text x="52" y="722" font-family="Liberation Sans" font-size="6" fill="#ccc">2</text>
  <!-- reels -->
  <g fill="#a9a9a9"><circle cx="67.5" cy="589" r="10"/><circle cx="67.5" cy="650" r="10"/><circle cx="67.5" cy="710" r="10"/></g>
  <g fill="#333">
   <g transform="translate(67.5,589)"><circle cx="-3.5" cy="-3.5" r="2.6"/><circle cx="3.5" cy="-3.5" r="2.6"/><circle cx="-3.5" cy="3.5" r="2.6"/><circle cx="3.5" cy="3.5" r="2.6"/><circle r="1.2"/></g>
   <g transform="translate(67.5,650)"><circle cx="-3.5" cy="-3.5" r="2.6"/><circle cx="3.5" cy="-3.5" r="2.6"/><circle cx="-3.5" cy="3.5" r="2.6"/><circle cx="3.5" cy="3.5" r="2.6"/><circle r="1.2"/></g>
   <g transform="translate(67.5,710)"><circle cx="-3.5" cy="-3.5" r="2.6"/><circle cx="3.5" cy="-3.5" r="2.6"/><circle cx="-3.5" cy="3.5" r="2.6"/><circle cx="3.5" cy="3.5" r="2.6"/><circle r="1.2"/></g>
  </g>
 </g>
</svg>
<div class="a grip" style="left:4px;top:482px;width:46px"></div>

<!-- clips -->
<div class="a" style="left:91px;top:621px;width:178px;height:57px;background:#17705c;border:1px solid #0c2a24;border-radius:0 5px 5px 0;overflow:hidden">
 <svg width="74" height="55" style="left:0;top:0">
  <defs><radialGradient id="cb" cx="0.4" cy="0.4" r="0.8"><stop offset="0" stop-color="#fafafa"/><stop offset="1" stop-color="#d8d8d8"/></radialGradient></defs>
  <rect width="74" height="55" fill="url(#cb)"/>
  <ellipse cx="62" cy="38" rx="7" ry="6" fill="#e4e4e4"/>
  <ellipse cx="50" cy="26" rx="2" ry="1.5" fill="#cde060"/><ellipse cx="42" cy="31" rx="1.5" ry="1.2" fill="#cde060"/>
  <ellipse cx="58" cy="37" rx="4" ry="3" fill="#cde040"/>
  <ellipse cx="68" cy="40" rx="2.5" ry="2" fill="#f0a0e0"/><ellipse cx="51" cy="35" rx="1.5" ry="1" fill="#f0a0e0"/>
  <ellipse cx="56" cy="51" rx="4" ry="4" fill="#cde040"/><ellipse cx="62" cy="48" rx="3" ry="2.5" fill="#f0a0e0"/><ellipse cx="72" cy="49" rx="5" ry="6" fill="#cde040"/>
  <rect x="5.5" y="17.5" width="16.5" height="12.5" fill="#111"/>
  <g fill="#b8d030"><rect x="9" y="20" width="2.5" height="2.5"/><rect x="16" y="24.5" width="2.5" height="2.5"/></g>
  <path d="M10.2,22.5 V25.7 H16" stroke="#b8d030" stroke-width="0.9" fill="none"/>
 </svg>
</div>
<div class="a" style="left:170px;top:642px;color:#f4f4f4;font-size:15px;line-height:18px;white-space:nowrap;font-family:'Liberation Mono',monospace;letter-spacing:-0.6px">墙纸.jpg</div>
<div class="a" style="left:90px;top:682px;width:180px;height:57px;background:#17705c;border:1.5px solid #f0900a;border-radius:3px;overflow:hidden">
 <div class="a" style="left:0;top:0;width:6px;height:56px;background:#f29410"></div>
 <div class="a" style="right:0;top:0;width:7px;height:56px;background:#f29410"></div>
 <svg width="180" height="56" style="left:0;top:0">
  <g fill="#fcd49a" stroke="#d27a10" stroke-width="0.6"><rect x="1.5" y="13" width="3.6" height="3.6"/><rect x="172" y="13" width="3.6" height="3.6"/><rect x="1.5" y="19.5" width="3.6" height="3.6"/><rect x="172" y="19.5" width="3.6" height="3.6"/><rect x="1.5" y="26" width="3.6" height="3.6"/><rect x="172" y="26" width="3.6" height="3.6"/><rect x="1.5" y="32.5" width="3.6" height="3.6"/><rect x="172" y="32.5" width="3.6" height="3.6"/><rect x="1.5" y="39" width="3.6" height="3.6"/><rect x="172" y="39" width="3.6" height="3.6"/></g>
  <rect x="6" y="0" width="39.5" height="56" fill="#000"/>
  <g fill="none" stroke="#b9a32e" stroke-width="1.5"><path d="M24,14 C22,24 26,34 32,44 C35,50 35,55 34,56"/><path d="M24,30 C30,26 34,24 38,24 M28,38 C32,36 36,36 38,38 M20,36 C16,34 12,34 8,36"/></g>
  <g fill="#b8d870"><ellipse cx="39" cy="24" rx="7" ry="3.5" transform="rotate(15 39 24)"/><ellipse cx="12" cy="20" rx="6" ry="3" transform="rotate(10 12 20)"/><ellipse cx="35" cy="42" rx="3.5" ry="6" transform="rotate(-20 35 42)"/><ellipse cx="10" cy="43" rx="4" ry="7" transform="rotate(30 10 43)"/><ellipse cx="28" cy="20" rx="5" ry="2.5"/></g>
  <g fill="#f4c0dc"><circle cx="25" cy="9" r="4"/><circle cx="31" cy="13" r="4"/><circle cx="29" cy="19" r="4"/><circle cx="21" cy="18" r="4"/><circle cx="19" cy="12" r="4"/></g>
  <circle cx="25" cy="14" r="1.5" fill="#c04090"/>
  <g fill="#f0b0d0"><circle cx="14" cy="33" r="2.5"/><circle cx="17" cy="36" r="2.5"/><circle cx="12" cy="37" r="2.5"/></g>
  <rect x="8" y="17.5" width="12" height="12" fill="#111"/>
  <g fill="#b8d030"><rect x="9.5" y="19" width="2.5" height="2.5"/><rect x="15.5" y="25" width="2.5" height="2.5"/></g>
  <path d="M10.7,21.5 V26.2 H15.5" stroke="#b8d030" stroke-width="0.9" fill="none"/>
 </svg>
</div>
<div class="a" style="left:141px;top:704px;color:#f4f4f4;font-size:15px;line-height:18px;white-space:nowrap;font-family:'Liberation Mono',monospace;letter-spacing:-0.8px">1.png</div>
<!-- watermark -->
<svg width="40" height="36" style="left:610px;top:711px">
 <defs><radialGradient id="wm" cx="0.45" cy="0.65" r="0.6"><stop offset="0" stop-color="#f2eef2"/><stop offset="0.7" stop-color="#d2ced4"/><stop offset="1" stop-color="#9aa6ac"/></radialGradient></defs>
 <circle cx="18" cy="22" r="15" fill="url(#wm)"/>
 <path d="M4,16 C8,6 20,2 30,6 L34,4 C36,12 34,20 30,24 C26,16 18,12 8,18 Z" fill="#1a8aa0"/>
 <path d="M10,12 C16,8 24,8 30,10" stroke="#4ac0d0" stroke-width="2" fill="none"/>
</svg>
<div class="a" style="left:652px;top:719px;color:#1a8aac;font-size:16px;font-weight:bold;line-height:20px;white-space:nowrap;letter-spacing:0.2px;-webkit-text-stroke:0.7px #1a8aac">系统天地</div>
</body></html>
